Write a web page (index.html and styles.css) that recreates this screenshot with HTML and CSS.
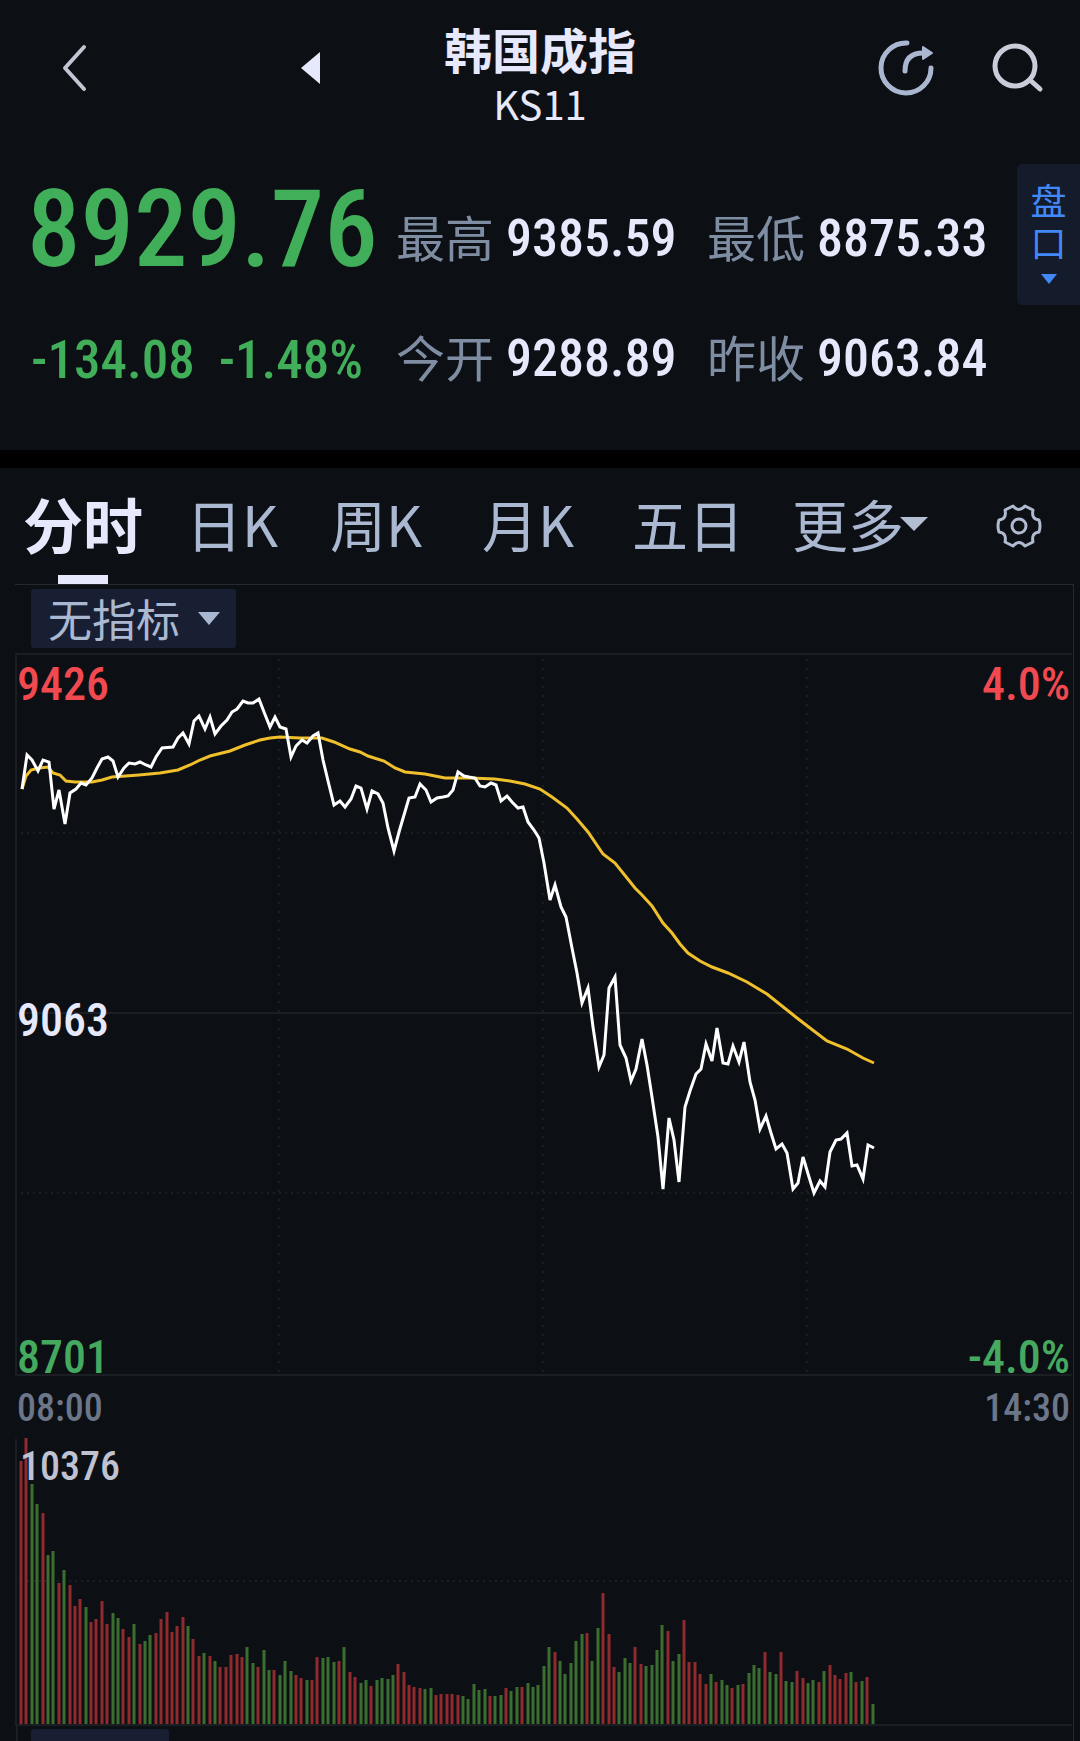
FILE: index.html
```html
<!DOCTYPE html>
<html lang="zh-CN">
  <head>
    <meta charset="UTF-8" />
    <meta name="viewport" content="width=device-width, initial-scale=1.0" />
    <title>韩国成指 KS11</title>
    <link rel="stylesheet" href="styles.css" />
  </head>

  <body>
    <div class="app">
      <header class="header">
        <div class="header-side">
          <button class="icon-btn" type="button" aria-label="返回">
            <svg width="26" height="50" viewBox="0 0 26 50">
              <path d="M22 4 L3 25 L22 46" fill="none" stroke="#c3c5d3" stroke-width="4" stroke-linecap="round" stroke-linejoin="round" />
            </svg>
          </button>
          <button class="icon-btn" type="button" aria-label="上一个">
            <svg width="19" height="32" viewBox="0 0 19 32">
              <path d="M19 0 V32 L0 16 Z" fill="#e6e9fc" />
            </svg>
          </button>
        </div>
        <div class="header-title">
          <h1>韩国成指</h1>
          <p>KS11</p>
        </div>
        <div class="header-side header-right">
          <button class="icon-btn" type="button" aria-label="分享">
            <svg width="58" height="60" viewBox="0 0 58 60">
              <path d="M29 5 A25 25 0 1 0 53 30" fill="none" stroke="#a9b7d1" stroke-width="5" stroke-linecap="round" />
              <path d="M27 33 C27 21 33 15 45 15" fill="none" stroke="#a9b7d1" stroke-width="5" stroke-linecap="round" />
              <path d="M45 9 L54 15 L45 21 Z" fill="#a9b7d1" stroke="#a9b7d1" stroke-width="2" stroke-linejoin="round" />
            </svg>
          </button>
          <button class="icon-btn" type="button" aria-label="搜索">
            <svg width="52" height="52" viewBox="0 0 52 52">
              <circle cx="23" cy="24" r="20" fill="none" stroke="#cbccda" stroke-width="5" />
              <path d="M38 38 L48 47" stroke="#cbccda" stroke-width="5" stroke-linecap="round" />
            </svg>
          </button>
        </div>
      </header>

      <section class="quote">
        <div class="quote-price">
          <div class="price">8929.76</div>
          <div class="change"><span>-134.08</span><span>-1.48%</span></div>
        </div>
        <dl class="quote-stats">
          <div><dt>最高</dt><dd>9385.59</dd></div>
          <div><dt>最低</dt><dd>8875.33</dd></div>
          <div><dt>今开</dt><dd>9288.89</dd></div>
          <div><dt>昨收</dt><dd>9063.84</dd></div>
        </dl>
        <button class="pankou" type="button">
          <span>盘</span>
          <span>口</span>
          <svg width="16" height="10" viewBox="0 0 16 10"><path d="M0 0 H16 L8 10 Z" fill="#4388f8" /></svg>
        </button>
      </section>

      <nav class="tabs">
        <button class="tab active" type="button">分时</button>
        <button class="tab" type="button">日K</button>
        <button class="tab" type="button">周K</button>
        <button class="tab" type="button">月K</button>
        <button class="tab" type="button">五日</button>
        <button class="tab more" type="button">更多<svg width="28" height="14" viewBox="0 0 28 14"><path d="M0 0 H28 L14 14 Z" fill="#b3bed3" /></svg></button>
        <button class="tab settings" type="button" aria-label="设置">
          <svg width="46" height="46" viewBox="-23 -23 46 46" fill="none" stroke="#b0bbd1" stroke-width="3" stroke-linejoin="round">
            <path d="M-6 -20 Q0 -13 6 -20 L14 -16 Q12 -7 20 -6 Q22 0 20 6 Q12 7 14 16 L6 20 Q0 13 -6 20 L-14 16 Q-12 7 -20 6 Q-22 0 -20 -6 Q-12 -7 -14 -16 Z" />
            <circle r="7" />
          </svg>
        </button>
      </nav>

      <main class="panel">
        <div class="toolbar">
          <label class="indicator">
            <select aria-label="指标">
              <option>无指标</option>
            </select>
            <svg width="22" height="13" viewBox="0 0 22 13"><path d="M0 0 H22 L11 13 Z" fill="#a9b8d0" /></svg>
          </label>
        </div>

        <div class="chart">
          <svg viewBox="15 653 1058 723">
            <path class="frame" d="M1072 654 H16 V1375 H1072 M16 1013 H1072" />
            <path class="dots" d="M21 833 H1072 M21 1193 H1072" />
            <path class="dots dots-v" d="M279 659 V1374 M543 659 V1374 M807 659 V1374" />
            <polyline
              class="avg"
              points="22,789 26,776 31,770 39,768 48,767 53,773 60,775 66,781 75,782 92,782 102,780 112,777 139,775 160,773 178,770 190,765 200,760 210,756 230,751 245,745 260,740 270,738 280,737 300,738 322,738 334,742 350,749 360,752 368,756 384,761 395,768 405,772 425,774 445,778 470,778 495,779 510,781 525,784 540,789 552,797 567,808 577,819 588,832 603,854 615,863 635,888 642,895 652,906 663,923 672,933 680,944 688,953 700,961 712,967 728,973 747,982 767,994 787,1010 797,1018 810,1028 827,1041 847,1049 863,1058 874,1063"
            />
            <polyline
              class="price-line"
              points="22,789 27,755 32,760 38,771 43,760 49,762 54,809 59,790 65,824 70,793 76,789 81,783 86,785 92,778 97,768 102,759 108,757 113,761 118,777 124,768 129,763 135,764 140,762 146,765 151,767 156,757 162,748 173,747 178,738 183,733 189,744 194,721 199,716 205,729 210,717 215,734 221,726 227,720 232,712 237,709 243,701 248,703 253,703 259,699 264,712 270,727 275,717 280,727 286,729 291,757 296,746 302,740 307,743 313,736 318,733 323,760 329,785 334,805 340,801 345,807 351,799 356,786 361,788 367,809 372,791 378,794 383,803 388,828 394,851 399,832 404,815 409,798 415,797 420,784 426,790 431,802 437,798 443,797 448,796 453,790 458,772 464,776 469,777 475,778 480,786 485,787 491,783 496,785 501,801 507,796 512,802 518,808 523,807 528,822 534,830 539,838 544,863 550,900 555,885 561,907 566,917 572,948 577,973 582,1003 588,988 593,1027 599,1067 604,1055 609,988 615,977 620,1045 626,1058 631,1081 636,1069 642,1039 647,1065 652,1097 658,1137 663,1189 669,1118 674,1140 679,1182 685,1107 690,1091 696,1074 701,1069 706,1044 712,1061 717,1028 723,1063 728,1064 733,1046 739,1062 744,1042 750,1082 755,1100 760,1129 766,1116 771,1133 776,1149 782,1144 787,1153 793,1189 798,1183 803,1157 809,1177 814,1193 820,1181 825,1187 830,1152 836,1140 841,1139 847,1133 852,1166 857,1165 863,1179 868,1145 874,1148"
            />
          </svg>
          <span class="axis top-left up">9426</span>
          <span class="axis top-right up">4.0%</span>
          <span class="axis middle-left">9063</span>
          <span class="axis bottom-left down">8701</span>
          <span class="axis bottom-right down">-4.0%</span>
        </div>

        <div class="times">
          <span>08:00</span>
          <span>14:30</span>
        </div>

        <div class="chart volume">
          <svg viewBox="15 1438 1058 288">
            <path class="frame" d="M16 1439 V1725 H1072" />
            <path class="dots" d="M21 1581 H1072" />
            <path class="bar-up" id="bars-up" />
            <path class="bar-down" id="bars-down" />
          </svg>
          <span class="volume-max">10376</span>
        </div>

        <div class="sub-toolbar">
          <button class="sub-indicator" type="button" aria-label="副图指标"></button>
        </div>
      </main>
    </div>

    <script src="script.js"></script>
  </body>
</html>
```

FILE: styles.css
```css
* {
  box-sizing: border-box;
}
body {
  margin: 0;
  background: #0c0f14;
  color: #e6e9fc;
  font-family: "Noto Sans CJK SC", "Noto Sans", sans-serif;
}
h1,
p,
dl,
dd {
  margin: 0;
}
button,
select {
  border: 0;
  padding: 0;
  background: none;
  color: inherit;
  font: inherit;
  cursor: pointer;
}
svg {
  display: block;
}
.app {
  height: 100vh;
  overflow: hidden;
}

/* header */
.header {
  display: grid;
  grid-template-columns: 1fr auto 1fr;
  align-items: center;
  height: 136px;
  padding: 0 36px;
}
.header-side {
  display: flex;
  align-items: center;
  justify-content: space-between;
  padding: 0 124px 0 26px;
}
.header-right {
  justify-content: flex-end;
  gap: 56px;
  padding: 0;
}
.header-title {
  padding-top: 12px;
  text-align: center;
}
.header-title h1 {
  font-size: 48px;
  line-height: 56px;
}
.header-title p {
  margin-top: 2px;
  font-size: 40px;
  line-height: 50px;
}

/* quote */
.quote {
  display: flex;
  height: 314px;
  padding-left: 27px;
}
.price,
.change,
dd,
.axis,
.times,
.volume-max {
  font-family: "Roboto Condensed", Roboto, sans-serif;
  font-weight: 500;
}
.quote-price {
  width: 369px;
  color: #41ae5a;
}
.price {
  padding-top: 30px;
  font-size: 107px;
  line-height: 128px;
}
.change {
  display: flex;
  gap: 24px;
  padding: 30px 0 0 4px;
  font-size: 53px;
  line-height: 72px;
}
.quote-stats {
  display: grid;
  grid-template-columns: 311px auto;
  grid-auto-rows: 72px;
  row-gap: 48px;
  flex: 1;
  padding-top: 66px;
}
.quote-stats div {
  display: flex;
  align-items: center;
  gap: 12px;
  white-space: nowrap;
}
dt {
  padding-bottom: 6px;
  color: #7f8da3;
  font-size: 49px;
}
dd {
  font-size: 52px;
}
.pankou {
  display: flex;
  flex-direction: column;
  align-items: center;
  width: 63px;
  height: 141px;
  margin-top: 28px;
  padding-top: 14px;
  border-radius: 5px 0 0 5px;
  background: #141b2a;
  color: #4388f8;
  font-size: 36px;
  line-height: 42px;
}
.pankou svg {
  margin-top: 12px;
}

/* tabs */
.tabs {
  display: grid;
  grid-template-columns: 166fr 132fr 156fr 148fr 172fr 172fr 134fr;
  height: 134px;
  border-top: 18px solid #000;
}
.tab {
  position: relative;
  display: flex;
  align-items: center;
  justify-content: center;
  padding-bottom: 8px;
  color: #abb8d1;
  font-size: 56px;
  white-space: nowrap;
}
.tab.active {
  color: #e6e9fc;
  font-size: 60px;
  font-weight: bold;
}
.tab.active::after {
  content: "";
  position: absolute;
  bottom: 0;
  left: 50%;
  width: 50px;
  height: 9px;
  margin-left: -25px;
  background: #e6e9fc;
}
.more svg {
  margin: 4px 0 0 -4px;
}
.tab.settings {
  padding: 0 0 0 12px;
}

/* charts */
.panel {
  margin: 0 6px 0 15px;
  border-top: 1px solid #25292e;
  border-right: 1px solid #25292e;
}
.toolbar {
  height: 68px;
  padding: 4px 16px 0;
}
.indicator {
  position: relative;
  display: inline-block;
}
.indicator select {
  display: block;
  width: 205px;
  height: 59px;
  padding: 0 0 2px 17px;
  border-radius: 3px;
  background: #191f33;
  color: #abb8d1;
  font-size: 44px;
  line-height: 56px;
  appearance: none;
}
.indicator svg {
  position: absolute;
  top: 23px;
  right: 16px;
  pointer-events: none;
}
.chart {
  position: relative;
}
.chart svg {
  width: 100%;
}
.frame {
  fill: none;
  stroke: #1b1e23;
  stroke-width: 2;
}
.dots {
  fill: none;
  stroke: #1b1e23;
  stroke-width: 2;
  stroke-dasharray: 2 4;
}
.dots-v {
  stroke-dasharray: 2 7;
}
.avg,
.price-line {
  fill: none;
  stroke: #f0bf2c;
  stroke-width: 3;
}
.price-line {
  stroke: #fff;
}
.bar-up,
.bar-down {
  fill: none;
  stroke: #8f2a2d;
  stroke-width: 3;
}
.bar-down {
  stroke: #3a6e2e;
}
.axis {
  position: absolute;
  font-size: 46px;
  line-height: 46px;
}
.top-left,
.middle-left,
.bottom-left {
  left: 2px;
}
.top-right,
.bottom-right {
  right: 3px;
}
.top-left,
.top-right {
  top: 8px;
}
.middle-left {
  top: 50%;
  margin-top: -18px;
}
.bottom-left,
.bottom-right {
  bottom: -4px;
}
.up {
  color: #f04a50;
}
.down {
  color: #45a95f;
}
.times {
  display: flex;
  justify-content: space-between;
  height: 62px;
  padding: 10px 3px 0 2px;
  color: #6c7689;
  font-size: 38px;
  line-height: 44px;
}
.volume-max {
  position: absolute;
  top: 7px;
  left: 5px;
  color: #bfc2d0;
  font-size: 40px;
  line-height: 44px;
}
.sub-toolbar {
  height: 64px;
  margin-left: 1px;
  padding: 3px 15px 0;
  border-left: 2px solid #1b1e23;
}
.sub-indicator {
  width: 138px;
  height: 61px;
  margin-left: -2px;
  border-radius: 3px;
  background: #191f33;
}
```

FILE: script.js
```js
// volume per sample, r = up, g = down
const volume =
  "r263 r286 g240 g220 r211 g169 g173 r141 g154 r139 r118 r125 g117 r102 r105 r123 r100 g111 g106 r95 " +
  "r87 g100 r80 g83 g89 r91 r105 r112 r92 r98 r107 g98 r85 r68 g71 r68 g63 r57 r57 r69 " +
  "r70 r67 g77 g61 r57 g74 g54 r54 g49 g63 g53 r49 r46 g44 r44 r67 g66 g67 g62 r63 " +
  "g77 r52 r47 g41 g44 r38 g44 g46 g45 g49 r60 r52 r39 r37 r36 g35 g36 r29 r30 r30 " +
  "r30 r29 g28 g25 g40 g34 g35 r28 g28 g29 r36 g33 g37 r37 g41 g37 g39 g58 g77 r72 " +
  "g63 g50 g61 g83 g90 r91 g63 g96 r131 r90 r57 g52 g66 g61 r77 r60 g58 g59 g74 g99 " +
  "r93 g63 g70 r104 r62 r62 r50 r40 g50 r42 g44 g39 r36 g39 r40 g51 g59 g56 r72 g52 " +
  "g50 r72 g43 g42 r53 r46 g41 g44 r42 g53 r59 r49 r45 r51 g52 r42 g43 r47 g20";

const paths = { r: "", g: "" };
volume.split(" ").forEach((item, i) => {
  const x = Math.round(21 + i * 5.39);
  paths[item[0]] += "M" + x + " 1724 v-" + item.slice(1);
});
document.getElementById("bars-up").setAttribute("d", paths.r);
document.getElementById("bars-down").setAttribute("d", paths.g);
```
